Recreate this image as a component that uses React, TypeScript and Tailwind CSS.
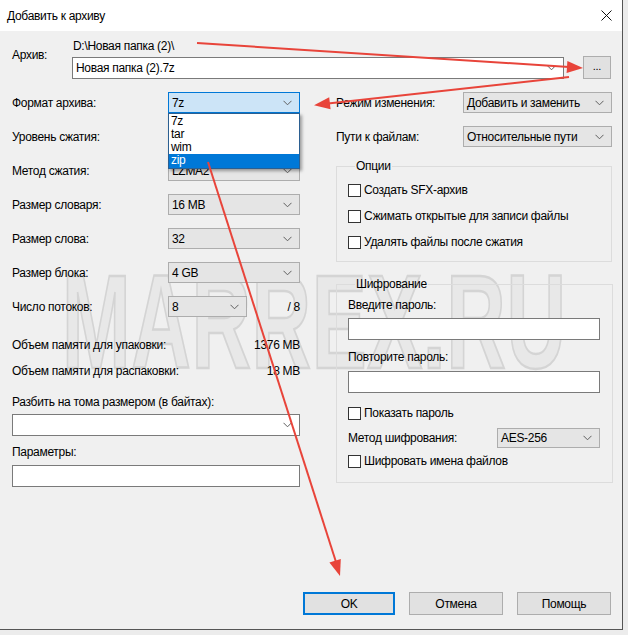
import React from "react";

const FONT = "font-['Liberation_Sans','DejaVu_Sans',sans-serif]";

function Chevron() {
  return (
    <svg width="9" height="6" viewBox="0 0 9 6" className="shrink-0">
      <path d="M0.5 0.8 L4.5 4.8 L8.5 0.8" fill="none" stroke="#5f5f5f" strokeWidth="1" />
    </svg>
  );
}

function Combo({
  value,
  className = "",
  focused = false,
}: {
  value: string;
  className?: string;
  focused?: boolean;
}) {
  return (
    <div
      className={`h-[21px] flex items-center justify-between pl-[3px] pr-[7px] border ${
        focused ? "border-[#0078d7] bg-[#cce4f7]" : "border-[#adadad] bg-[#e5e5e5]"
      } ${className}`}
    >
      <span className="leading-none">{value}</span>
      <Chevron />
    </div>
  );
}

function EditCombo({ value = "", className = "" }: { value?: string; className?: string }) {
  return (
    <div
      className={`h-[22px] flex items-center justify-between pl-[3px] pr-[7px] border border-[#7a7a7a] bg-white ${className}`}
    >
      <span className="leading-none">{value}</span>
      <Chevron />
    </div>
  );
}

function TextBox({ className = "" }: { className?: string }) {
  return <div className={`h-[22px] border border-[#7a7a7a] bg-white ${className}`} />;
}

function Check({ label }: { label: string }) {
  return (
    <div className="flex items-center gap-[3px] h-[14px]">
      <div className="w-[13px] h-[13px] border border-[#333] bg-white shrink-0" />
      <span className="leading-none">{label}</span>
    </div>
  );
}

function Row({ label, children }: { label: string; children: React.ReactNode }) {
  return (
    <div className="flex items-center h-[21px]">
      <span className="w-[156px] shrink-0">{label}</span>
      {children}
    </div>
  );
}

function Button({ label, primary = false, w }: { label: string; primary?: boolean; w: string }) {
  return (
    <div
      className={`${w} h-[23px] flex items-center justify-center bg-[#e1e1e1] ${
        primary ? "border-2 border-[#0078d7]" : "border border-[#adadad]"
      }`}
    >
      {label}
    </div>
  );
}

function Arrows() {
  const red = "#e8443a";
  return (
    <svg
      className="absolute inset-0 pointer-events-none"
      width="628"
      height="635"
      viewBox="0 0 628 635"
    >
      <line x1="197" y1="43" x2="569" y2="67" stroke={red} strokeWidth="2" />
      <polygon points="583,68 566.6,73 567.4,61" fill={red} />
      <line x1="569" y1="77" x2="328" y2="103.4" stroke={red} strokeWidth="2" />
      <polygon points="314,105.2 329.2,97.3 330.6,109.2" fill={red} />
      <line x1="208" y1="162" x2="336" y2="562" stroke={red} strokeWidth="2" />
      <polygon points="340,576 340.8,559 329.4,562.6" fill={red} />
    </svg>
  );
}

export default function App() {
  return (
    <div
      className={`relative w-[628px] h-[635px] overflow-hidden bg-[#ececec] text-[12px] tracking-[-0.3px] text-black ${FONT}`}
    >
      <div className="w-[623px] h-[630px] flex flex-col bg-[#f0f0f0] border-r border-b border-[#555]">
        {/* title bar */}
        <div className="h-[31px] bg-white flex items-center justify-between pl-[7px] pr-[10px] shrink-0">
          <span>Добавить к архиву</span>
          <svg width="11" height="11" viewBox="0 0 11 11">
            <path d="M0.5 0.5 L10.5 10.5 M10.5 0.5 L0.5 10.5" stroke="#111" strokeWidth="1" />
          </svg>
        </div>

        <div className="relative flex-1 flex flex-col pl-[12px] pr-[10px]">
          {/* watermark */}
          <div className="absolute left-[62px] top-[224px] w-[500px] overflow-hidden pointer-events-none select-none">
            <div className="origin-left [transform:scaleX(0.615)] font-['Liberation_Sans',sans-serif] font-bold text-[134px] leading-none tracking-[1px] text-[#e8e8e8] [-webkit-text-stroke:2.5px_#d4d4d4] whitespace-nowrap">
              MARREX.RU
            </div>
          </div>

          {/* archive */}
          <div className="relative flex pt-[8px]">
            <span className="w-[60px] shrink-0 pt-[7px]">Архив:</span>
            <div className="flex flex-col w-[492px]">
              <span className="pl-[1px] leading-[14px]">D:\Новая папка (2)\</span>
              <EditCombo value="Новая папка (2).7z" className="mt-[4px]" />
            </div>
            <div className="ml-[19px] mt-[17px] w-[28px] h-[23px] border border-[#adadad] bg-[#e1e1e1] flex items-center justify-center text-[11px] leading-none pb-[3px]">
              ...
            </div>
          </div>

          {/* columns */}
          <div className="relative flex mt-[13px] gap-[36px]">
            {/* left */}
            <div className="w-[288px] flex flex-col">
              <div className="flex flex-col gap-[13px]">
                <Row label="Формат архива:">
                  <Combo value="7z" focused className="w-[132px]" />
                </Row>
                <Row label="Уровень сжатия:">
                  <Combo value="Нормальный" className="w-[132px]" />
                </Row>
                <Row label="Метод сжатия:">
                  <Combo value="LZMA2" className="w-[132px]" />
                </Row>
                <Row label="Размер словаря:">
                  <Combo value="16 MB" className="w-[132px]" />
                </Row>
                <Row label="Размер слова:">
                  <Combo value="32" className="w-[132px]" />
                </Row>
                <Row label="Размер блока:">
                  <Combo value="4 GB" className="w-[132px]" />
                </Row>
                <Row label="Число потоков:">
                  <Combo value="8" className="w-[79px]" />
                  <span className="ml-auto">/ 8</span>
                </Row>
              </div>
              <div className="flex justify-between mt-[21px] leading-[14px]">
                <span>Объем памяти для упаковки:</span>
                <span>1376 MB</span>
              </div>
              <div className="flex justify-between mt-[12px] leading-[14px]">
                <span>Объем памяти для распаковки:</span>
                <span>18 MB</span>
              </div>
              <span className="mt-[17px] leading-[14px]">Разбить на тома размером (в байтах):</span>
              <EditCombo className="mt-[5px]" />
              <span className="mt-[9px] leading-[14px]">Параметры:</span>
              <TextBox className="mt-[6px]" />
            </div>

            {/* right */}
            <div className="w-[276px] flex flex-col">
              <div className="flex items-center h-[21px]">
                <span className="w-[127px] shrink-0">Режим изменения:</span>
                <Combo value="Добавить и заменить" className="w-[149px]" />
              </div>
              <div className="flex items-center h-[21px] mt-[13px]">
                <span className="w-[127px] shrink-0">Пути к файлам:</span>
                <Combo value="Относительные пути" className="w-[149px]" />
              </div>

              <fieldset className="mt-[12px] h-[103px] border border-[#dcdcdc] pl-[11px] pr-[12px]">
                <legend className="ml-[7px] px-[1px] leading-[14px]">Опции</legend>
                <div className="flex flex-col gap-[12px] pt-[10px]">
                  <Check label="Создать SFX-архив" />
                  <Check label="Сжимать открытые для записи файлы" />
                  <Check label="Удалять файлы после сжатия" />
                </div>
              </fieldset>

              <fieldset className="mt-[15px] h-[206px] border border-[#dcdcdc] pl-[11px] pr-[12px] flex flex-col">
                <legend className="ml-[7px] px-[1px] leading-[14px]">Шифрование</legend>
                <span className="mt-[7px] leading-[14px]">Введите пароль:</span>
                <TextBox className="mt-[6px]" />
                <span className="mt-[10px] leading-[14px]">Повторите пароль:</span>
                <TextBox className="mt-[7px]" />
                <div className="mt-[13px]">
                  <Check label="Показать пароль" />
                </div>
                <div className="mt-[8px] flex items-center h-[20px]">
                  <span className="w-[149px] shrink-0">Метод шифрования:</span>
                  <Combo value="AES-256" className="w-[103px] !h-[20px]" />
                </div>
                <div className="mt-[6px]">
                  <Check label="Шифровать имена файлов" />
                </div>
              </fieldset>
            </div>
          </div>

          {/* buttons */}
          <div className="relative mt-auto mb-[14px] flex justify-end gap-[14px] pr-[1px]">
            <Button label="OK" primary w="w-[92px]" />
            <Button label="Отмена" w="w-[94px]" />
            <Button label="Помощь" w="w-[94px]" />
          </div>

          {/* open drop-down list */}
          <div className="absolute left-[168px] top-[82px] w-[132px] bg-white border border-[#2b5f91] shadow-[2px_2px_3px_rgba(0,0,0,0.35)] flex flex-col leading-[13px]">
            <span className="pl-[2px] pt-[1px]">7z</span>
            <span className="pl-[2px]">tar</span>
            <span className="pl-[2px]">wim</span>
            <span className="pl-[2px] bg-[#0078d7] text-white pb-[1px]">zip</span>
          </div>
        </div>
      </div>
      <Arrows />
    </div>
  );
}
